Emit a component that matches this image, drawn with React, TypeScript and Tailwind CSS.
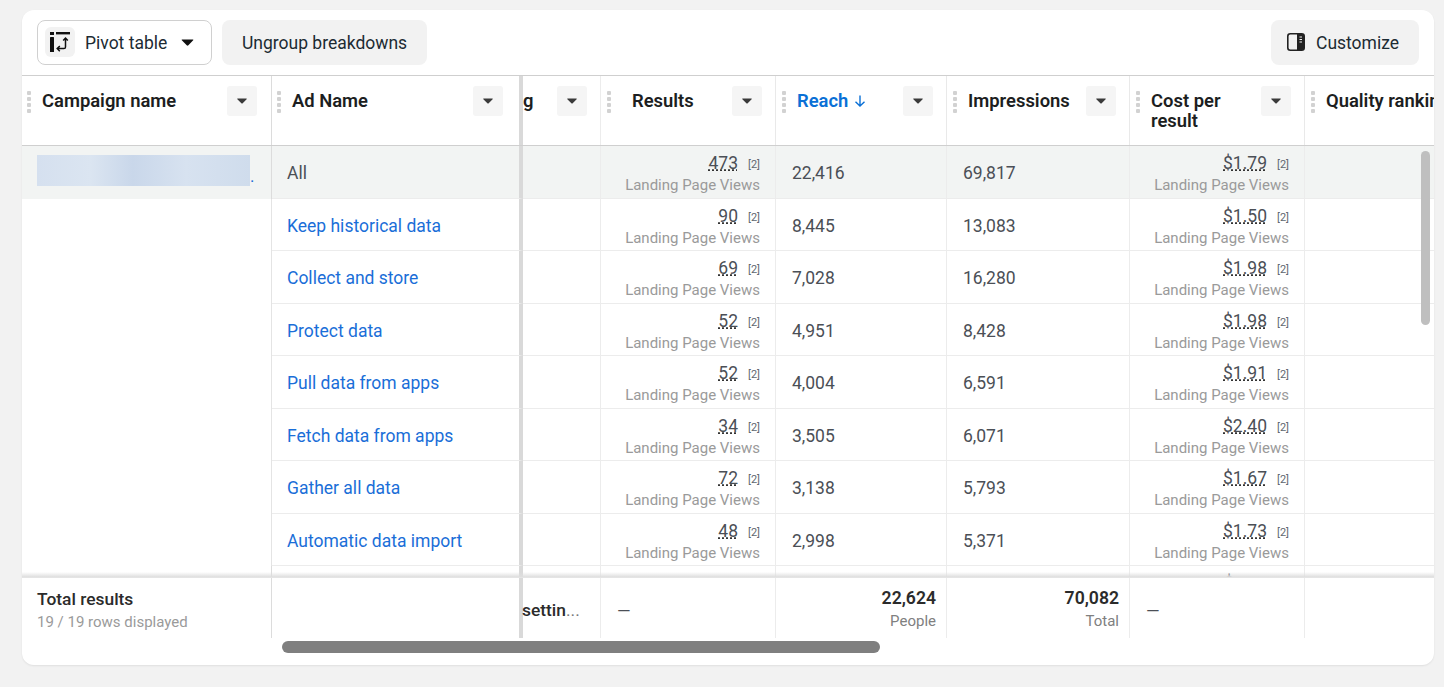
import type { ReactNode } from "react";

const grid = "grid grid-cols-[250px_251px_78px_175px_171px_183px_175px_129px]";

const rows = [
  { name: "All", results: "473", reach: "22,416", impressions: "69,817", cost: "$1.79" },
  { name: "Keep historical data", results: "90", reach: "8,445", impressions: "13,083", cost: "$1.50" },
  { name: "Collect and store", results: "69", reach: "7,028", impressions: "16,280", cost: "$1.98" },
  { name: "Protect data", results: "52", reach: "4,951", impressions: "8,428", cost: "$1.98" },
  { name: "Pull data from apps", results: "52", reach: "4,004", impressions: "6,591", cost: "$1.91" },
  { name: "Fetch data from apps", results: "34", reach: "3,505", impressions: "6,071", cost: "$2.40" },
  { name: "Gather all data", results: "72", reach: "3,138", impressions: "5,793", cost: "$1.67" },
  { name: "Automatic data import", results: "48", reach: "2,998", impressions: "5,371", cost: "$1.73" },
];

const Caret = ({ className }: { className: string }) => (
  <svg viewBox="0 0 14 8" className={className}>
    <path d="M1 0.5h12c.6 0 .9.6.5 1L8 7.2c-.5.5-1.4.5-1.9 0L.5 1.5C.1 1.1.4.5 1 .5z" fill="currentColor" />
  </svg>
);

const Grip = () => (
  <svg viewBox="0 0 4 22" className="mt-[5px] h-[22px] w-[4px] shrink-0 text-[#d2d2d2]">
    <rect y="0" width="4" height="4" rx="1" fill="currentColor" />
    <rect y="6" width="4" height="4" rx="1" fill="currentColor" />
    <rect y="12" width="4" height="4" rx="1" fill="currentColor" />
    <rect y="18" width="4" height="4" rx="1" fill="currentColor" />
  </svg>
);

const SortButton = () => (
  <div className="ml-auto flex h-[30px] w-[30px] shrink-0 items-center justify-center rounded-[3px] bg-[#f5f5f5] text-[#3a3a3a]">
    <Caret className="h-[6px] w-[10px]" />
  </div>
);

interface HeadCellProps {
  label: ReactNode;
  className?: string;
  textClass?: string;
  border?: string;
  button?: boolean;
}

const HeadCell = ({ label, className = "pl-[6px] pr-[13px]", textClass = "ml-[11px]", border = "border-r border-[#e9e9e9]", button = true }: HeadCellProps) => (
  <div className={`flex items-start overflow-hidden pt-[10px] ${border} ${className}`}>
    <Grip />
    <div className={`pt-[5px] text-[18.4px] leading-[20px] font-semibold text-[#1c1e21] ${textClass}`}>{label}</div>
    {button && <SortButton />}
  </div>
);

const Metric = ({ value }: { value: string }) => (
  <div className="flex flex-col items-end pr-[15px] pt-[8px]">
    <div className="flex items-start">
      <span className="text-[17.5px] leading-[19px] text-[#4b4f56] underline decoration-dotted decoration-[#333] underline-offset-[1px]">{value}</span>
      <span className="ml-[10px] mt-[5px] text-[11px] leading-[12px] text-[#606770]">[2]</span>
    </div>
    <span className="mt-[3px] text-[15px] leading-[18px] text-[#9a9a9a]">Landing Page Views</span>
  </div>
);

const line = "border-r border-[#ececec]";

export default function App() {
  return (
    <div className="h-[687px] overflow-hidden bg-[#f2f2f2] pl-[22px] pr-[10px] pt-[10px] font-['Roboto',sans-serif]">
      <div className="h-[655px] overflow-hidden rounded-xl bg-white shadow-[0_1px_2px_rgba(0,0,0,0.08)]">
        {/* Toolbar */}
        <div className="flex h-[66px] items-center border-b border-[#cfcfcf] pb-[1px] pl-[15px] pr-[15px] text-[17.5px] text-[#1c2b33]">
          <div className="flex h-[45px] w-[175px] items-center rounded-lg border border-[#d0d0d0] pl-[7px]">
            <div className="flex h-[30px] w-[30px] items-center justify-center rounded-md bg-[#f2f2f2]">
              <svg viewBox="0 0 20 20" className="h-[20px] w-[20px] text-[#111]">
                <rect x="0" y="0" width="4" height="3" fill="currentColor" />
                <rect x="6" y="0" width="14" height="2.4" fill="currentColor" />
                <rect x="0" y="5" width="4" height="15" rx="0.6" fill="currentColor" />
                <path d="M15.5 6.5v8.5c0 1-.6 1.6-1.6 1.6H7.5M13.2 8.5l2.3-2.5 2.3 2.5M9.8 14l-2.6 2.6 2.6 2.6" fill="none" stroke="currentColor" strokeWidth="1.5" />
              </svg>
            </div>
            <span className="ml-[10px] pt-[2px]">Pivot table</span>
            <Caret className="ml-[14px] h-[7px] w-[13px] text-[#111]" />
          </div>
          <div className="ml-[10px] flex h-[45px] w-[205px] items-center justify-center rounded-lg bg-[#f2f2f2] pt-[2px]">Ungroup breakdowns</div>
          <div className="ml-auto flex h-[45px] w-[148px] items-center rounded-lg bg-[#f2f2f2] pl-[16px]">
            <svg viewBox="0 0 18 18" className="h-[18px] w-[18px] text-[#222]">
              <rect x="0.8" y="0.8" width="16.4" height="16.4" rx="2.5" fill="none" stroke="currentColor" strokeWidth="1.6" />
              <path d="M10 1h5c1.6 0 2.5.9 2.5 2.5v11c0 1.6-.9 2.5-2.5 2.5h-5z" fill="currentColor" />
              <path d="M12.5 4h2.5M12.5 6.5h2.5M12.5 9h2.5" stroke="#f2f2f2" strokeWidth="1" />
            </svg>
            <span className="ml-[11px] pt-[2px]">Customize</span>
          </div>
        </div>

        {/* Header */}
        <div className={`${grid} h-[70px] border-b border-[#cfcfcf]`}>
          <HeadCell label="Campaign name" border="border-r border-[#dcdcdc]" className="pl-[5px] pr-[14px]" />
          <HeadCell label="Ad Name" border="border-r-[4px] border-[#d9d9d9]" className="pl-[5px] pr-[16px]" />
          <div className={`flex items-start pr-[13px] pt-[10px] ${line}`}>
            <span className="pt-[5px] text-[18.4px] leading-[20px] font-semibold text-[#1c1e21]">g</span>
            <SortButton />
          </div>
          <HeadCell label="Results" textClass="ml-[21px]" />
          <HeadCell
            textClass="ml-[11px] !text-[#0a70d6]"
            label={
              <span className="flex items-center">
                Reach
                <svg viewBox="0 0 12 12" className="ml-[6px] h-[12px] w-[12px]">
                  <path d="M6 0.5v10.5M1.5 6.8L6 11l4.5-4.2" fill="none" stroke="currentColor" strokeWidth="1.4" />
                </svg>
              </span>
            }
          />
          <HeadCell label="Impressions" />
          <HeadCell label={<>Cost per<br />result</>} />
          <HeadCell label="Quality ranking" button={false} border="" className="pl-[6px]" textClass="ml-[11px] whitespace-nowrap" />
        </div>

        {/* Rows */}
        <div className="relative h-[431px] overflow-hidden">
          {rows.map((r, i) => (
            <div key={r.name} className={`${grid} h-[52.5px] ${i === 0 ? "bg-[#f2f4f3]" : ""}`}>
              <div className={`flex items-start pl-[15px] pt-[9px] border-r ${i === 0 ? "border-[#dcdcdc]" : "border-[#e4e4e4]"}`}>
                {i === 0 && (
                  <>
                    <div className="h-[31px] w-[213px] bg-[linear-gradient(90deg,#d5e0ef,#dbe5f1_25%,#c9d7ea_45%,#d7e2f0_70%,#cfdcec)]" />
                    <span className="mt-[11px] text-[17px] leading-[20px] text-[#1a6ed8]">.</span>
                  </>
                )}
              </div>
              <div className={`flex items-center border-r-[4px] border-b border-r-[#d9d9d9] border-b-[#ececec] pl-[15px] pt-[3px] text-[17.5px] ${i === 0 ? "text-[#4b4f56]" : "text-[#1a6ed8]"}`}>{r.name}</div>
              <div className={`border-b border-b-[#ececec] ${line}`} />
              <div className={`border-b border-b-[#ececec] ${line}`}><Metric value={r.results} /></div>
              <div className={`flex items-center border-b border-b-[#ececec] pl-[16px] pt-[3px] text-[17.5px] text-[#4b4f56] ${line}`}>{r.reach}</div>
              <div className={`flex items-center border-b border-b-[#ececec] pl-[16px] pt-[3px] text-[17.5px] text-[#4b4f56] ${line}`}>{r.impressions}</div>
              <div className={`border-b border-b-[#ececec] ${line}`}><Metric value={r.cost} /></div>
              <div className="border-b border-b-[#ececec]" />
            </div>
          ))}
          {/* partly scrolled row under the totals */}
          <div className={`${grid} h-[52.5px]`}>
            <div className="border-r border-[#dcdcdc]" />
            <div className="border-r-[4px] border-[#d9d9d9]" />
            <div className={line} />
            <div className={line} />
            <div className={line} />
            <div className={line} />
            <div className={`${line} pl-[94px] pt-[8px] text-[17.5px] leading-[19px] text-[#4b4f56]`}>$</div>
          </div>
          <div className="absolute bottom-0 left-0 right-0 h-[5px] bg-gradient-to-b from-transparent to-[#dedede]" />
          <div className="absolute right-[4px] top-[5px] h-[174px] w-[9px] rounded-full bg-[#bfbfbf]" />
        </div>

        {/* Totals */}
        <div className={`${grid} h-[61px] border-t border-[#e4e4e4]`}>
          <div className="border-r border-[#dcdcdc] pl-[15px] pt-[11px]">
            <div className="text-[17.4px] leading-[20px] font-medium text-[#2b2b2b]">Total results</div>
            <div className="mt-[4px] text-[15px] leading-[18px] text-[#9a9a9a]">19 / 19 rows displayed</div>
          </div>
          <div className="border-r-[4px] border-[#d9d9d9]" />
          <div className={`-ml-[1px] flex items-center pt-[5px] text-[17.4px] text-[#2b2b2b] ${line}`}>
            <span className="font-medium">settin</span><span className="text-[#777]">...</span>
          </div>
          <div className={`flex items-center pl-[16px] pt-[6px] text-[17.4px] text-[#4b4f56] ${line}`}>—</div>
          <div className={`pr-[10px] pt-[10px] text-right ${line}`}>
            <div className="text-[17.6px] leading-[20px] font-semibold text-[#2b2b2b]">22,624</div>
            <div className="mt-[4px] text-[15px] leading-[18px] text-[#808080]">People</div>
          </div>
          <div className={`pr-[10px] pt-[10px] text-right ${line}`}>
            <div className="text-[17.6px] leading-[20px] font-semibold text-[#2b2b2b]">70,082</div>
            <div className="mt-[4px] text-[15px] leading-[18px] text-[#808080]">Total</div>
          </div>
          <div className={`flex items-center pl-[16px] pt-[6px] text-[17.4px] text-[#4b4f56] ${line}`}>—</div>
          <div />
        </div>

        {/* Horizontal scrollbar */}
        <div className="ml-[260px] mt-[3px] h-[12px] w-[598px] rounded-full bg-[#7f7f7f]" />
      </div>
    </div>
  );
}
